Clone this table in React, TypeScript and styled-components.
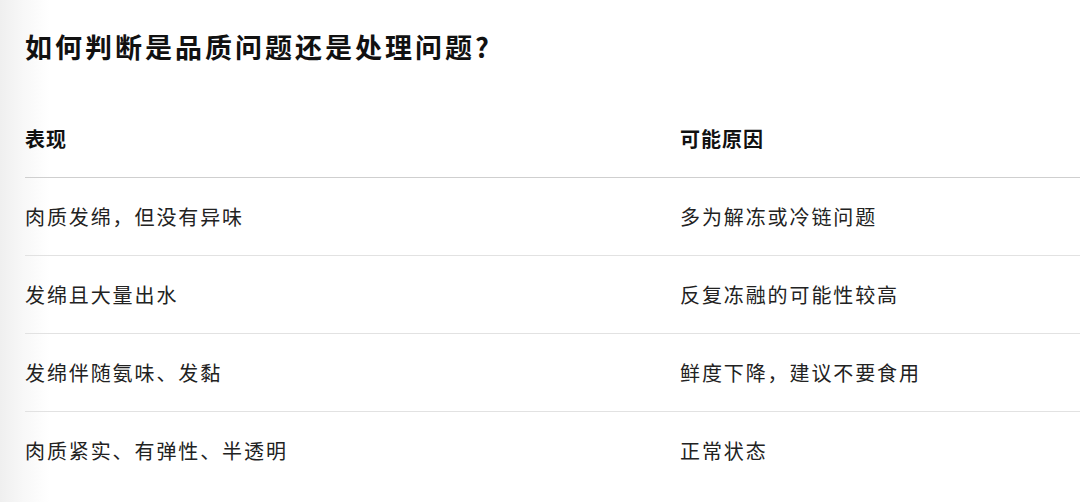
import * as React from "react";
import styled, { createGlobalStyle } from "styled-components";

interface Row {
  sign: string;
  cause: string;
}

const rows: Row[] = [
  { sign: "肉质发绵，但没有异味", cause: "多为解冻或冷链问题" },
  { sign: "发绵且大量出水", cause: "反复冻融的可能性较高" },
  { sign: "发绵伴随氨味、发黏", cause: "鲜度下降，建议不要食用" },
  { sign: "肉质紧实、有弹性、半透明", cause: "正常状态" },
];

const App: React.FC = () => {
  return (
    <>
      <GlobalStyle />
      <Page>
        <Title>如何判断是品质问题还是处理问题?</Title>
        <Table>
          <thead>
            <tr>
              <HeadCell>表现</HeadCell>
              <HeadCell>可能原因</HeadCell>
            </tr>
          </thead>
          <tbody>
            {rows.map((r) => (
              <BodyRow key={r.sign}>
                <Cell>{r.sign}</Cell>
                <Cell>{r.cause}</Cell>
              </BodyRow>
            ))}
          </tbody>
        </Table>
      </Page>
    </>
  );
};

const GlobalStyle = createGlobalStyle`
  html, body {
    margin: 0;
    padding: 0;
  }
  body {
    width: 1080px;
    height: 502px;
    overflow: hidden;
    background: linear-gradient(to right, #efefef 0px, #f8f8f8 24px, #ffffff 50px);
    font-family: "Noto Sans CJK SC", "Noto Sans", sans-serif;
    color: #1a1a1a;
  }
`;

const Page = styled.div`
  padding: 27px 0 0 25px;
`;

const Title = styled.h2`
  margin: 0;
  font-size: 27px;
  line-height: 40px;
  letter-spacing: 3px;
  font-weight: 700;
  color: #111;
`;

const Table = styled.table`
  width: 100%;
  margin-top: 33px;
  border-collapse: collapse;
  table-layout: fixed;
`;

const HeadCell = styled.th`
  height: 77px;
  padding: 0;
  text-align: left;
  vertical-align: middle;
  font-size: 20px;
  letter-spacing: 1px;
  font-weight: 700;
  color: #111;
  border-bottom: 1px solid #cfcfcf;

  &:first-child {
    width: 655px;
  }
`;

const BodyRow = styled.tr`
  & + & td {
    border-top: 1px solid #e2e2e2;
  }
`;

const Cell = styled.td`
  height: 77px;
  padding: 0;
  vertical-align: middle;
  font-size: 20px;
  letter-spacing: 1.9px;
  color: #222;
`;

export default App;
